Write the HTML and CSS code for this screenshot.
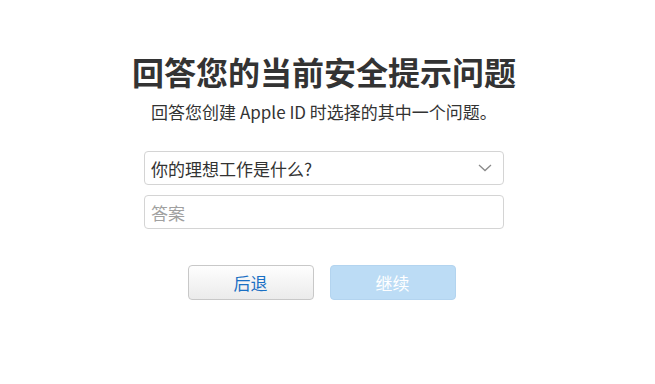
FILE: index.html
```html
<!DOCTYPE html>
<html lang="zh-CN">
<head>
	<meta charset="UTF-8">
	<meta name="viewport" content="width=device-width, initial-scale=1.0">
	<title>回答您的当前安全提示问题</title>
	<link rel="stylesheet" href="styles.css">
</head>
<body>
	<div class="question">
		<h1 class="question__title">回答您的当前安全提示问题</h1>
		<p class="question__sub">回答您创建 Apple ID 时选择的其中一个问题。</p>
		<div class="question__form">
			<div class="question__select">
				<span>你的理想工作是什么?</span>
				<svg class="question__chevron" width="14" height="8" viewBox="0 0 14 8">
					<path d="M1 1 L7 6.5 L13 1" fill="none" stroke="#8a8a8a" stroke-width="1.3"/>
				</svg>
			</div>
			<input type="text" class="question__inp" placeholder="答案">
		</div>
		<div class="question__buttons">
			<div class="btn btn--back">后退</div>
			<div class="btn btn--next">继续</div>
		</div>
	</div>
</body>
</html>
```

FILE: styles.css
```css
*{
	box-sizing: border-box;
}
body{
	margin: 0;
	background: #fff;
	font-family: "Noto Sans CJK SC", "Liberation Sans", sans-serif;
	color: #333;
}
.question{
	display: flex;
	flex-direction: column;
	align-items: center;
	padding-top: 51px;
	padding-right: 7px;
}
.question__title{
	margin: 0;
	font-size: 32px;
	line-height: 40px;
	font-weight: 700;
	color: #333;
}
.question__sub{
	margin: 9px 0 0;
	font-size: 17px;
	line-height: 24px;
	color: #333;
}
.question__form{
	width: 360px;
	margin-top: 27px;
	display: flex;
	flex-direction: column;
	gap: 10px;
}
.question__select,
.question__inp{
	width: 360px;
	height: 34px;
	border: 1px solid #d4d4d4;
	border-radius: 4px;
	background: #fff;
	font-family: inherit;
	font-size: 17px;
	color: #333;
	padding: 0 6px;
}
.question__select{
	display: flex;
	align-items: center;
	justify-content: space-between;
	padding-right: 11px;
}
.question__chevron{
	display: block;
}
.question__inp{
	outline: none;
}
.question__inp::placeholder{
	color: #a0a0a0;
}
.question__buttons{
	display: flex;
	gap: 16px;
	margin-top: 36px;
	margin-right: 5px;
}
.btn{
	width: 126px;
	height: 35px;
	border-radius: 4px;
	text-align: center;
	line-height: 33px;
	font-size: 17px;
}
.btn--back{
	border: 1px solid #c8c8c8;
	background: linear-gradient(#fefefe, #ebebeb);
	color: #1a6fc4;
}
.btn--next{
	border: 1px solid #b3d4ef;
	background: #bcdcf5;
	color: #fff;
}
```
